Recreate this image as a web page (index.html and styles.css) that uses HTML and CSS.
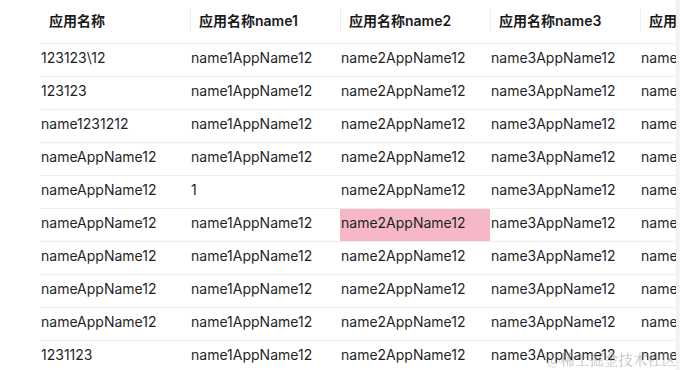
FILE: index.html
```html
<!DOCTYPE html>
<html lang="zh">
<head>
<meta charset="utf-8">
<link rel="stylesheet" href="styles.css">
</head>
<body>
<div class="frame">
  <div class="table-wrap">
    <table class="grid">
      <thead>
        <tr>
          <th>应用名称</th>
          <th class="sep">应用名称name1</th>
          <th class="sep">应用名称name2</th>
          <th class="sep">应用名称name3</th>
          <th class="sep">应用名称name4</th>
        </tr>
      </thead>
      <tbody>
        <tr><td>123123\12</td><td>name1AppName12</td><td>name2AppName12</td><td>name3AppName12</td><td>name4AppName12</td></tr>
        <tr><td>123123</td><td>name1AppName12</td><td>name2AppName12</td><td>name3AppName12</td><td>name4AppName12</td></tr>
        <tr><td>name1231212</td><td>name1AppName12</td><td>name2AppName12</td><td>name3AppName12</td><td>name4AppName12</td></tr>
        <tr><td>nameAppName12</td><td>name1AppName12</td><td>name2AppName12</td><td>name3AppName12</td><td>name4AppName12</td></tr>
        <tr><td>nameAppName12</td><td>1</td><td>name2AppName12</td><td>name3AppName12</td><td>name4AppName12</td></tr>
        <tr><td>nameAppName12</td><td>name1AppName12</td><td class="hl">name2AppName12</td><td>name3AppName12</td><td>name4AppName12</td></tr>
        <tr><td>nameAppName12</td><td>name1AppName12</td><td>name2AppName12</td><td>name3AppName12</td><td>name4AppName12</td></tr>
        <tr><td>nameAppName12</td><td>name1AppName12</td><td>name2AppName12</td><td>name3AppName12</td><td>name4AppName12</td></tr>
        <tr><td>nameAppName12</td><td>name1AppName12</td><td>name2AppName12</td><td>name3AppName12</td><td>name4AppName12</td></tr>
        <tr><td>1231123</td><td>name1AppName12</td><td>name2AppName12</td><td>name3AppName12</td><td>name4AppName12</td></tr>
      </tbody>
    </table>
  </div>
  <div class="edge"></div>
  <div class="watermark">@稀土掘金技术社区</div>
</div>
</body>
</html>
```

FILE: styles.css
```css
html, body {
  margin: 0;
  padding: 0;
  background: #ffffff;
}

body {
  width: 680px;
  height: 370px;
  overflow: hidden;
  font-family: "Inter", "Noto Sans CJK SC", sans-serif;
  font-size: 14px;
  color: #1f1f1f;
}

.frame {
  position: relative;
  width: 680px;
  height: 370px;
  display: flex;
  overflow: hidden;
}

.table-wrap {
  width: 636px;
  flex: none;
  margin-left: 40px;
  overflow: hidden;
  height: 370px;
}

.grid {
  border-collapse: collapse;
  table-layout: fixed;
  width: 750px;
}

.grid th,
.grid td {
  width: 150px;
  box-sizing: border-box;
  text-align: left;
  white-space: nowrap;
  overflow: hidden;
  border-bottom: 1px solid #eeeeee;
}

.grid th {
  height: 43px;
  padding: 0 0 2px 9px;
  font-weight: 600;
  position: relative;
  color: #1a1a1a;
}

.grid th.sep::before {
  content: "";
  position: absolute;
  left: 0;
  top: 8px;
  height: 24px;
  width: 1px;
  background: #eeeeee;
}

.grid td {
  height: 33px;
  padding: 0 0 3px 1px;
  line-height: 22px;
}

.grid td.hl {
  background: #f6b8c9;
}

.edge {
  width: 4px;
  flex: none;
  height: 370px;
  background: linear-gradient(to right, #efefef 0, #f6f6f6 4px);
}

.watermark {
  position: absolute;
  left: 547px;
  top: 348px;
  font-family: "Noto Serif CJK SC", "Liberation Serif", serif;
  font-size: 14.5px;
  color: rgba(150, 150, 150, 0.6);
}
```
